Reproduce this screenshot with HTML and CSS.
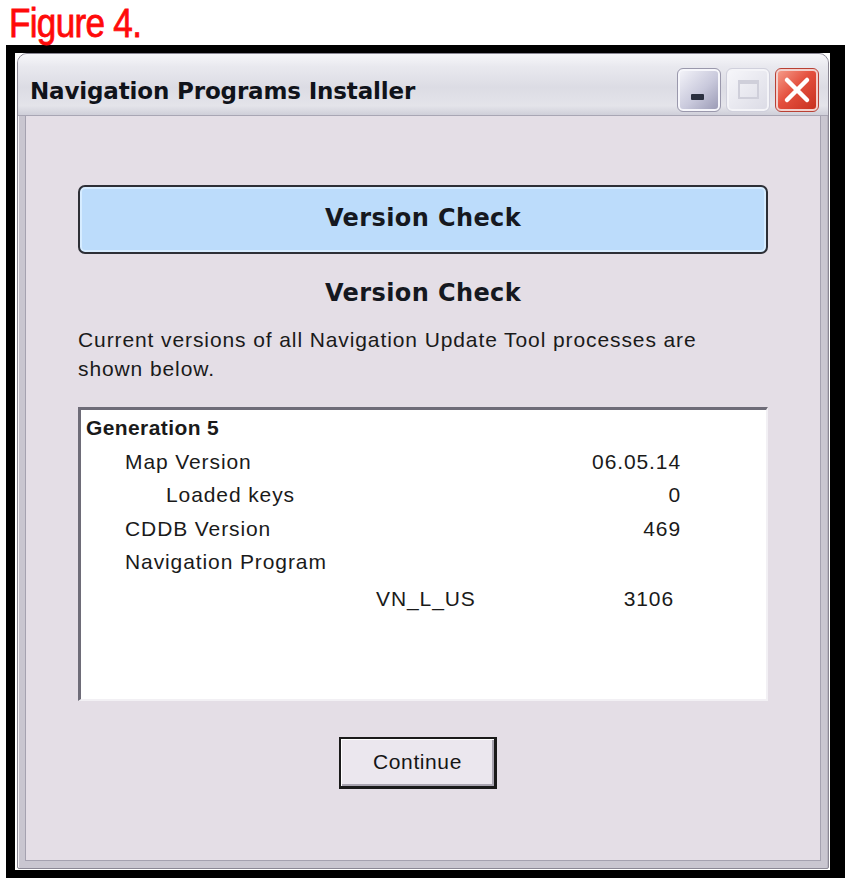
FILE: index.html
```html
<!DOCTYPE html>
<html>
<head>
<meta charset="utf-8">
<link rel="stylesheet" href="styles.css">
</head>
<body>
<div class="fig-label"><span class="fig-text">Figure 4.</span></div>
<div class="frame">
  <div class="window">
    <div class="titlebar">
      <div class="title">Navigation Programs Installer</div>
      <div class="controls">
        <div class="btn btn-min"><span class="dash"></span></div>
        <div class="btn btn-max"><span class="box"></span></div>
        <div class="btn btn-close">
          <svg width="30" height="30" viewBox="0 0 30 30"><path d="M5 5 L25 25 M25 5 L5 25" stroke="#fff" stroke-width="4.5" stroke-linecap="round"/></svg>
        </div>
      </div>
    </div>
    <div class="client">
      <div class="banner">Version Check</div>
      <div class="heading">Version Check</div>
      <p class="intro">Current versions of all Navigation Update Tool processes are shown below.</p>
      <div class="listbox">
        <div class="row row-gen"><span class="label">Generation 5</span></div>
        <div class="row ind1"><span class="label">Map Version</span><span class="value">06.05.14</span></div>
        <div class="row ind2"><span class="label">Loaded keys</span><span class="value">0</span></div>
        <div class="row ind1"><span class="label">CDDB Version</span><span class="value">469</span></div>
        <div class="row ind1"><span class="label">Navigation Program</span></div>
        <div class="row ind3"><span class="label">VN_L_US</span><span class="value v2">3106</span></div>
      </div>
      <div class="actions">
        <div class="button">Continue</div>
      </div>
    </div>
  </div>
</div>
</body>
</html>
```

FILE: styles.css
```css
html, body {
  margin: 0;
  padding: 0;
  background: #ffffff;
}
body {
  width: 852px;
  height: 886px;
  overflow: hidden;
  font-family: "Liberation Sans", Arial, sans-serif;
}
.fig-label {
  height: 45px;
  padding: 1px 0 0 9px;
  box-sizing: border-box;
}
.fig-text {
  display: inline-block;
  color: #ff0a0a;
  font-family: "Liberation Sans", Arial, sans-serif;
  font-size: 41px;
  line-height: 44px;
  letter-spacing: -0.8px;
  -webkit-text-stroke: 0.8px #ff0a0a;
  transform: scaleX(0.855);
  transform-origin: left top;
}
.frame {
  margin-left: 6px;
  width: 839px;
  height: 833px;
  box-sizing: border-box;
  border-style: solid;
  border-color: #000;
  border-width: 8px 15px 8px 9px;
  background: #fff;
  padding: 0 1px 1px 2px;
}
.window {
  height: 816px;
  display: flex;
  flex-direction: column;
  background: #c9c6d0;
  border: 1px solid #8a8794;
  border-radius: 10px 10px 2px 2px;
  box-sizing: border-box;
  padding: 0 7px 7px 7px;
  box-shadow: inset 1px 0 0 #f4f2f6, inset -1px 0 0 #b8b5c0;
}
.titlebar {
  height: 61px;
  margin: 0 -7px;
  padding: 0 9px 0 12px;
  display: flex;
  align-items: center;
  justify-content: space-between;
  border-radius: 9px 9px 0 0;
  background: linear-gradient(#f7f7fa 0%, #e9e9ef 20%, #dcdce4 55%, #e4e4ea 85%, #cfcfd9 100%);
  border-bottom: 1px solid #a8a6b4;
}
.title {
  font-family: "DejaVu Sans", sans-serif;
  font-weight: bold;
  font-size: 23px;
  color: #10131a;
  letter-spacing: -0.15px;
  margin-top: 12px;
}
.controls {
  display: flex;
  gap: 7px;
  margin-top: 10px;
  margin-right: 1px;
}
.btn {
  width: 42px;
  height: 42px;
  box-sizing: border-box;
  border-radius: 5px;
  position: relative;
  display: flex;
  align-items: center;
  justify-content: center;
}
.btn-min {
  border: 2px solid #f6f6fb;
  outline: 1px solid #9a98ac;
  background: linear-gradient(135deg, #f2f2f8 0%, #c9c9dc 55%, #9c9cb6 100%);
}
.btn-min .dash {
  position: absolute;
  left: 11px;
  bottom: 9px;
  width: 13px;
  height: 6px;
  background: #2b3040;
  border-radius: 1px;
}
.btn-max {
  border: 2px solid #f4f4f8;
  outline: 1px solid #d0d0dc;
  background: linear-gradient(135deg, #f6f6fa, #dcdce6);
}
.btn-max .box {
  width: 21px;
  height: 19px;
  box-sizing: border-box;
  border: 2px solid #cfcfda;
  border-top-width: 4px;
}
.btn-close {
  border: 2px solid #f3d0cc;
  outline: 1px solid #b94034;
  background: linear-gradient(135deg, #f59a88 0%, #e4503e 45%, #c8301f 100%);
}
.client {
  flex: 1;
  background: #e4dee6;
  border: 1px solid #a5a2b0;
  border-top: none;
  padding: 0 52px;
  display: flex;
  flex-direction: column;
}
.banner {
  margin-top: 69px;
  height: 69px;
  box-sizing: border-box;
  border: 2px solid #2d2f36;
  border-radius: 7px;
  background: #bcdcfb;
  box-shadow: inset 0 0 0 2px #d6ecff;
  display: flex;
  align-items: center;
  justify-content: center;
  font-family: "DejaVu Sans", sans-serif;
  font-weight: bold;
  font-size: 24px;
  color: #151820;
  letter-spacing: 0.4px;
  padding-bottom: 3px;
}
.heading {
  margin-top: 24px;
  text-align: center;
  font-family: "DejaVu Sans", sans-serif;
  font-weight: bold;
  font-size: 24px;
  color: #151820;
  letter-spacing: 0.4px;
  line-height: 30px;
}
.intro {
  margin: 17px 0 0 0;
  font-size: 21px;
  line-height: 29px;
  letter-spacing: 0.9px;
  color: #1a1a1a;
}
.listbox {
  margin-top: 24px;
  height: 294px;
  box-sizing: border-box;
  background: #fff;
  border-style: solid;
  border-width: 3px 2px 2px 3px;
  border-color: #6e6c78 #f2f0f4 #f2f0f4 #6e6c78;
  padding: 1px 86px 0 5px;
  color: #1a1a1a;
  font-size: 21px;
  letter-spacing: 0.9px;
}
.row {
  height: 33.5px;
  display: flex;
  align-items: center;
  justify-content: space-between;
}
.row-gen {
  font-weight: bold;
  height: 34px;
  letter-spacing: 0.4px;
}
.ind1 { padding-left: 39px; }
.ind2 { padding-left: 80px; }
.ind3 { padding-left: 290px; height: 40px; }
.value { margin-right: -1px; }
.value.v2 { margin-right: 6px; }
.actions {
  margin-top: 36px;
  display: flex;
  justify-content: center;
}
.button {
  width: 158px;
  height: 52px;
  box-sizing: border-box;
  border-style: solid;
  border-width: 2px 3px 3px 2px;
  border-color: #1a1a1a;
  background: #ebe7ee;
  box-shadow: inset 1px 1px 0 #fff, inset -2px -2px 0 #a8a4b0;
  display: flex;
  align-items: center;
  justify-content: center;
  font-size: 21px;
  letter-spacing: 0.6px;
  color: #151515;
  margin-left: -10px;
  padding-bottom: 2px;
}
```
